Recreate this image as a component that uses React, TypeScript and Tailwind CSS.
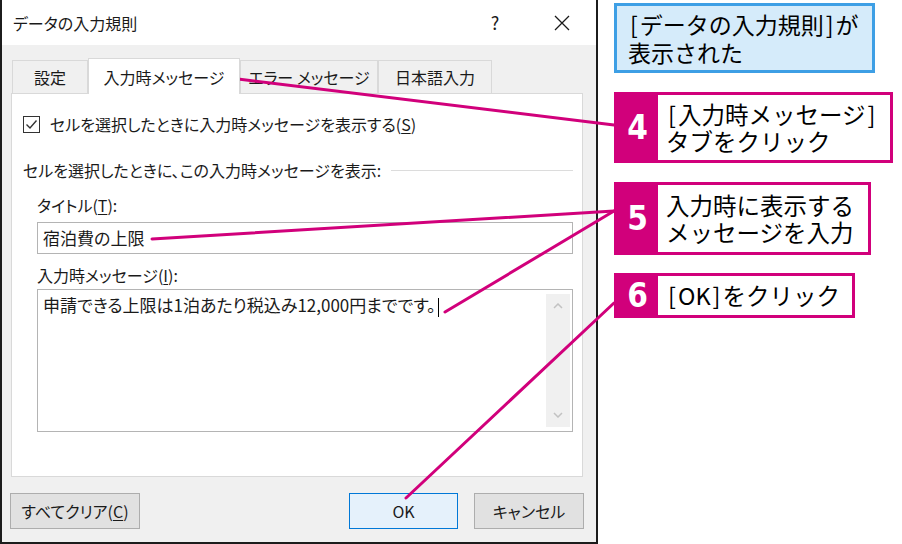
import { ReactNode } from 'react';

const ui = { fontFamily: '"Noto Sans CJK JP", "Noto Sans", sans-serif' };
const pink = '#d1007b';

function Key({ children }: { children: ReactNode }) {
  return <span className="underline underline-offset-2 decoration-1">{children}</span>;
}

// square brackets in the callouts sit a little wider than the plain glyphs
function Br({ children }: { children: ReactNode }) {
  return <span className="px-[2px]">{children}</span>;
}

function Tab({ label, width, active }: { label: string; width: string; active?: boolean }) {
  return (
    <div
      className={`${width} flex items-center justify-center border border-[#d9d9d9] border-b-0 text-[16px] text-[#1a1a1a] ${
        active ? 'h-[36px] bg-white relative z-10 -mb-px' : 'h-[33px] bg-[#f0f0f0]'
      }`}
    >
      {label}
    </div>
  );
}

function Button({ children, width, primary }: { children: ReactNode; width: string; primary?: boolean }) {
  return (
    <div
      className={`${width} h-[36px] flex items-center justify-center text-[16px] text-[#1a1a1a] border ${
        primary ? 'bg-[#e5f1fb] border-[#0078d7]' : 'bg-[#e1e1e1] border-[#adadad]'
      }`}
    >
      {children}
    </div>
  );
}

function Step({ n, width, height, children }: { n: string; width: string; height: string; children: ReactNode }) {
  return (
    <div className={`${width} ${height} flex border-[3px] bg-white`} style={{ borderColor: pink }}>
      <div
        className="w-[41px] flex items-center justify-center text-white text-[33px] font-bold"
        style={{ background: pink, fontFamily: '"DejaVu Sans Condensed", "DejaVu Sans", sans-serif' }}
      >
        {n}
      </div>
      <div className="flex-1 flex flex-col justify-center pl-[8px] text-[23.5px] leading-[27px] text-black">
        {children}
      </div>
    </div>
  );
}

export default function App() {
  return (
    <div className="relative w-[902px] h-[544px] bg-white overflow-hidden flex" style={ui}>
      {/* dialog window */}
      <div className="w-[598px] h-[544px] flex flex-col border-x-2 border-b-2 border-[#1c1c1c] [font-feature-settings:'palt']">
        <div className="h-[45px] bg-white flex items-center pl-[11px] pr-[20px] text-[16px] text-[#1a1a1a]">
          <span className="flex-1">データの入力規則</span>
          <span className="w-[20px] text-center mr-[49px] text-[18px]">?</span>
          <svg width="16" height="16" viewBox="0 0 16 16" className="mr-[6px]">
            <path d="M1 1 L15 15 M15 1 L1 15" stroke="#1a1a1a" strokeWidth="1.3" />
          </svg>
        </div>

        <div className="flex-1 bg-[#f0f0f0] flex flex-col pt-[13px]">
          <div className="flex items-end ml-[10px]">
            <Tab label="設定" width="w-[76px]" />
            <Tab label="入力時メッセージ" width="w-[152px]" active />
            <Tab label="エラー メッセージ" width="w-[138px]" />
            <Tab label="日本語入力" width="w-[114px]" />
          </div>

          <div className="ml-[9px] w-[572px] h-[384px] bg-white border border-[#d9d9d9] flex flex-col text-[16px] text-[#1a1a1a]">
            <div className="mt-[21px] ml-[11px] h-[18px] flex items-center gap-[10px]">
              <div className="w-[17px] h-[17px] border border-[#333] flex items-center justify-center">
                <svg width="13" height="13" viewBox="0 0 13 13">
                  <path d="M1.5 6.5 L5 10 L11.5 2.5" fill="none" stroke="#333" strokeWidth="1.4" />
                </svg>
              </div>
              <span>
                セルを選択したときに入力時メッセージを表示する(<Key>S</Key>)
              </span>
            </div>

            <div className="mt-[26px] ml-[11px] mr-[9px] h-[22px] flex items-center gap-[10px]">
              <span>セルを選択したときに、この入力時メッセージを表示:</span>
              <div className="flex-1 h-px bg-[#dcdcdc]" />
            </div>

            <div className="mt-[13px] ml-[25px] h-[22px] leading-[22px]">
              タイトル(<Key>T</Key>):
            </div>
            <div className="mt-[6px] ml-[25px] w-[536px] h-[32px] border border-[#b4b4b4] flex items-center pl-[5px] text-[17px]">
              宿泊費の上限
            </div>

            <div className="mt-[10px] ml-[25px] h-[22px] leading-[22px]">
              入力時メッセージ(<Key>I</Key>):
            </div>
            <div className="mt-[3px] ml-[25px] w-[536px] h-[143px] border border-[#b4b4b4] flex">
              <div className="flex-1 pl-[5px] pt-[3px] leading-[24px] text-[17px]">
                申請できる上限は1泊あたり税込み12,000円までです。<span className="inline-block w-px h-[19px] bg-black align-middle ml-[2px]" />
              </div>
              <div className="w-[24px] my-[4px] mr-[2px] bg-[#f0f0f0] flex flex-col items-center justify-between py-[9px]">
                <svg width="10" height="6" viewBox="0 0 10 6">
                  <path d="M1 5 L5 1 L9 5" fill="none" stroke="#c2c2c2" strokeWidth="1.5" />
                </svg>
                <svg width="10" height="6" viewBox="0 0 10 6">
                  <path d="M1 1 L5 5 L9 1" fill="none" stroke="#c2c2c2" strokeWidth="1.5" />
                </svg>
              </div>
            </div>
          </div>

          <div className="mt-[16px] flex items-center pl-[8px]">
            <Button width="w-[130px]">
              すべてクリア(<Key>C</Key>)
            </Button>
            <div className="ml-[209px]">
              <Button width="w-[109px]" primary>
                OK
              </Button>
            </div>
            <div className="ml-[16px]">
              <Button width="w-[110px]">キャンセル</Button>
            </div>
          </div>
        </div>
      </div>

      {/* callouts */}
      <div className="ml-[16px] flex flex-col">
        <div className="mt-[3px] w-[261px] h-[70px] border-[3px] border-[#3d9fe5] bg-[#d5ebfa] pl-[11px] flex flex-col justify-center text-[23px] leading-[28px] text-black">
          <div>
            <Br>[</Br>データの入力規則<Br>]</Br>が
          </div>
          <div>表示された</div>
        </div>
        <div className="mt-[19px]">
          <Step n="4" width="w-[279px]" height="h-[71px]">
            <div>
              <Br>[</Br>入力時メッセージ<Br>]</Br>
            </div>
            <div>タブをクリック</div>
          </Step>
        </div>
        <div className="mt-[19px]">
          <Step n="5" width="w-[257px]" height="h-[73px]">
            <div>入力時に表示する</div>
            <div>メッセージを入力</div>
          </Step>
        </div>
        <div className="mt-[18px]">
          <Step n="6" width="w-[241px]" height="h-[45px]">
            <div>
              <Br>[</Br>OK<Br>]</Br>をクリック
            </div>
          </Step>
        </div>
      </div>

      {/* leader lines */}
      <svg className="absolute inset-0 pointer-events-none" width="902" height="544">
        <g stroke={pink} strokeWidth="3" strokeLinecap="round">
          <line x1="230" y1="78" x2="614" y2="125" />
          <line x1="152" y1="239" x2="614" y2="211" />
          <line x1="445" y1="312" x2="614" y2="211" />
          <line x1="406" y1="498" x2="614" y2="303" />
        </g>
      </svg>
    </div>
  );
}
